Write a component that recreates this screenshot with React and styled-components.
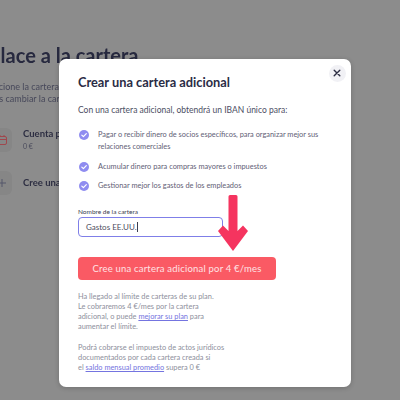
import React from "react";
import styled, { createGlobalStyle } from "styled-components";

const Global = createGlobalStyle`
  html, body { margin: 0; padding: 0; width: 400px; height: 400px; overflow: hidden; background: #8c8c8c; }
  body { font-family: "Lato", "Liberation Sans", sans-serif; }
  #root { width: 400px; height: 400px; }
`;

const Page = styled.div`
  position: relative;
  width: 400px;
  height: 400px;
  overflow: hidden;
  background: #8c8c8c;
`;

const Behind = styled.div`
  display: flex;
  flex-direction: column;
  margin-left: -22px;
  padding-top: 45px;
  width: 300px;
  filter: blur(0.5px);
`;

const BehindTitle = styled.h1`
  margin: 0 0 16px;
  font-size: 20px;
  line-height: 20px;
  font-weight: 700;
  color: #27293f;
  white-space: nowrap;
`;

const BehindText = styled.p`
  margin: 0 0 13px;
  font-size: 9px;
  line-height: 12px;
  color: #47485a;
  white-space: nowrap;
`;

const BehindRow = styled.div`
  display: flex;
  align-items: center;
  gap: 11px;
  height: 43px;
`;

const BehindList = styled.div`
  display: flex;
  flex-direction: column;
`;

const IconTile = styled.div`
  box-sizing: border-box;
  width: 34px;
  height: 24px;
  border-radius: 6px;
  background: #868686;
  display: flex;
  align-items: center;
  justify-content: flex-end;
  padding-right: 5px;
  color: ${(p) => p.$color};
`;

const RowText = styled.div`
  display: flex;
  flex-direction: column;
  gap: 2px;
`;

const RowTitle = styled.div`
  font-size: 9.5px;
  line-height: 12px;
  font-weight: 700;
  color: #2d2e42;
  white-space: nowrap;
`;

const RowSub = styled.div`
  font-size: 7px;
  line-height: 9px;
  color: #4a4b5c;
`;

const Modal = styled.div`
  position: absolute;
  left: 59px;
  top: 59px;
  width: 292px;
  height: 328px;
  box-sizing: border-box;
  padding: 15px 19px 0;
  border-radius: 7px;
  background: #fff;
  box-shadow: 0 1px 5px rgba(0, 0, 0, 0.2);
`;

const Close = styled.button`
  position: absolute;
  right: 5.5px;
  top: 5.5px;
  width: 17px;
  height: 17px;
  padding: 0;
  border: 0;
  border-radius: 50%;
  background: #f1f1f5;
  color: #2b2c42;
  display: flex;
  align-items: center;
  justify-content: center;
`;

const Title = styled.h2`
  margin: 0 0 14px;
  font-size: 12.8px;
  line-height: 16px;
  font-weight: 700;
  color: #2a2c45;
`;

const Intro = styled.p`
  margin: 0 0 12px;
  font-size: 8.5px;
  line-height: 13px;
  color: #4c4e63;
`;

const Features = styled.ul`
  list-style: none;
  margin: 0 0 15px;
  padding: 0 0 0 1px;
  display: flex;
  flex-direction: column;
  gap: 7.5px;
`;

const Feature = styled.li`
  display: flex;
  gap: 9px;
  font-size: 7.4px;
  line-height: 12px;
  color: #5f6075;
  white-space: nowrap;
  align-items: ${(p) => (p.$top ? "flex-start" : "center")};
`;

const CheckIcon = styled.svg`
  flex: none;
  width: 10px;
  height: 10px;
  margin-top: ${(p) => (p.$top ? "1px" : "0")};
`;

const FieldLabel = styled.label`
  display: block;
  margin-bottom: 1px;
  font-size: 6.5px;
  line-height: 9px;
  color: #3d3e50;
`;

const Field = styled.div`
  box-sizing: border-box;
  width: 145px;
  height: 20px;
  padding: 0 7px;
  display: flex;
  align-items: center;
  border: 1px solid #7f7fe8;
  border-radius: 4px;
  font-size: 8px;
  color: #4d4e60;
`;

const Caret = styled.span`
  width: 1px;
  height: 10px;
  background: #3c3d50;
`;

const Primary = styled.button`
  display: block;
  width: 198px;
  height: 23px;
  margin: 20px 0 12px;
  padding: 0;
  border: 0;
  border-radius: 4px;
  background: #fa5a64;
  color: #ffe3e4;
  font-family: inherit;
  font-size: 9.5px;
  letter-spacing: 0.2px;
`;

const Note = styled.p`
  margin: 0 0 11px;
  font-size: 7.4px;
  line-height: 10px;
  color: #8e8f9c;
  white-space: nowrap;
`;

const NoteLink = styled.a`
  color: #7474e0;
  text-decoration: underline;
`;

const Arrow = styled.svg`
  position: absolute;
  left: 218px;
  top: 195px;
  width: 30px;
  height: 56px;
`;

function Check({ top }) {
  return (
    <CheckIcon viewBox="0 0 10 10" $top={top}>
      <circle cx="5" cy="5" r="5" fill="#8f8cf0" />
      <path d="M2.8 5.1 4.4 6.6 7.3 3.6" fill="none" stroke="#fff" strokeWidth="1.2" strokeLinecap="round" strokeLinejoin="round" />
    </CheckIcon>
  );
}

export default function App() {
  return (
    <Page>
      <Global />
      <Behind>
        <BehindTitle>Enlace a la cartera</BehindTitle>
        <BehindText>
          Seleccione la cartera para
          <br />
          Debes cambiar la cartera
        </BehindText>
        <BehindList>
          <BehindRow>
            <IconTile $color="#a0474d">
              <svg width="10" height="10" viewBox="0 0 10 10" fill="none" stroke="currentColor">
                <rect x="0.5" y="1.5" width="9" height="8" rx="1.5" />
                <path d="M0.5 4.5h9M3 0v2M7 0v2" />
              </svg>
            </IconTile>
            <RowText>
              <RowTitle>Cuenta principal</RowTitle>
              <RowSub>0 €</RowSub>
            </RowText>
          </BehindRow>
          <BehindRow>
            <IconTile $color="#55566a">
              <svg width="10" height="10" viewBox="0 0 10 10" fill="none" stroke="currentColor">
                <path d="M5 1v8M1 5h8" />
              </svg>
            </IconTile>
            <RowText>
              <RowTitle>Cree una cartera</RowTitle>
            </RowText>
          </BehindRow>
        </BehindList>
      </Behind>
      <Modal>
        <Close aria-label="Cerrar">
          <svg width="8" height="8" viewBox="0 0 8 8" fill="none" stroke="currentColor" strokeWidth="1.4" strokeLinecap="round">
            <path d="M1.2 1.2l5.6 5.6M6.8 1.2l-5.6 5.6" />
          </svg>
        </Close>
        <Title>Crear una cartera adicional</Title>
        <Intro>Con una cartera adicional, obtendrá un IBAN único para:</Intro>
        <Features>
          <Feature $top>
            <Check top />
            <span>
              Pagar o recibir dinero de socios específicos, para organizar mejor sus
              <br />
              relaciones comerciales
            </span>
          </Feature>
          <Feature>
            <Check />
            <span>Acumular dinero para compras mayores o impuestos</span>
          </Feature>
          <Feature>
            <Check />
            <span>Gestionar mejor los gastos de los empleados</span>
          </Feature>
        </Features>
        <FieldLabel>Nombre de la cartera</FieldLabel>
        <Field>
          Gastos EE.UU.
          <Caret />
        </Field>
        <Primary>Cree una cartera adicional por 4 €/mes</Primary>
        <Note>
          Ha llegado al límite de carteras de su plan.
          <br />
          Le cobraremos 4 €/mes por la cartera
          <br />
          adicional, o puede <NoteLink>mejorar su plan</NoteLink> para
          <br />
          aumentar el límite.
        </Note>
        <Note>
          Podrá cobrarse el impuesto de actos jurídicos
          <br />
          documentados por cada cartera creada si
          <br />
          el <NoteLink>saldo mensual promedio</NoteLink> supera 0 €
        </Note>
      </Modal>
      <Arrow viewBox="0 0 30 56">
        <path d="M10.5 1.5Q10.5 0 12 0h6q1.5 0 1.500 1.500V36L25 30.500l5 5.500L15 56 0 36l5-5.500L10.500 36z" fill="#f5345f" />
      </Arrow>
    </Page>
  );
}
